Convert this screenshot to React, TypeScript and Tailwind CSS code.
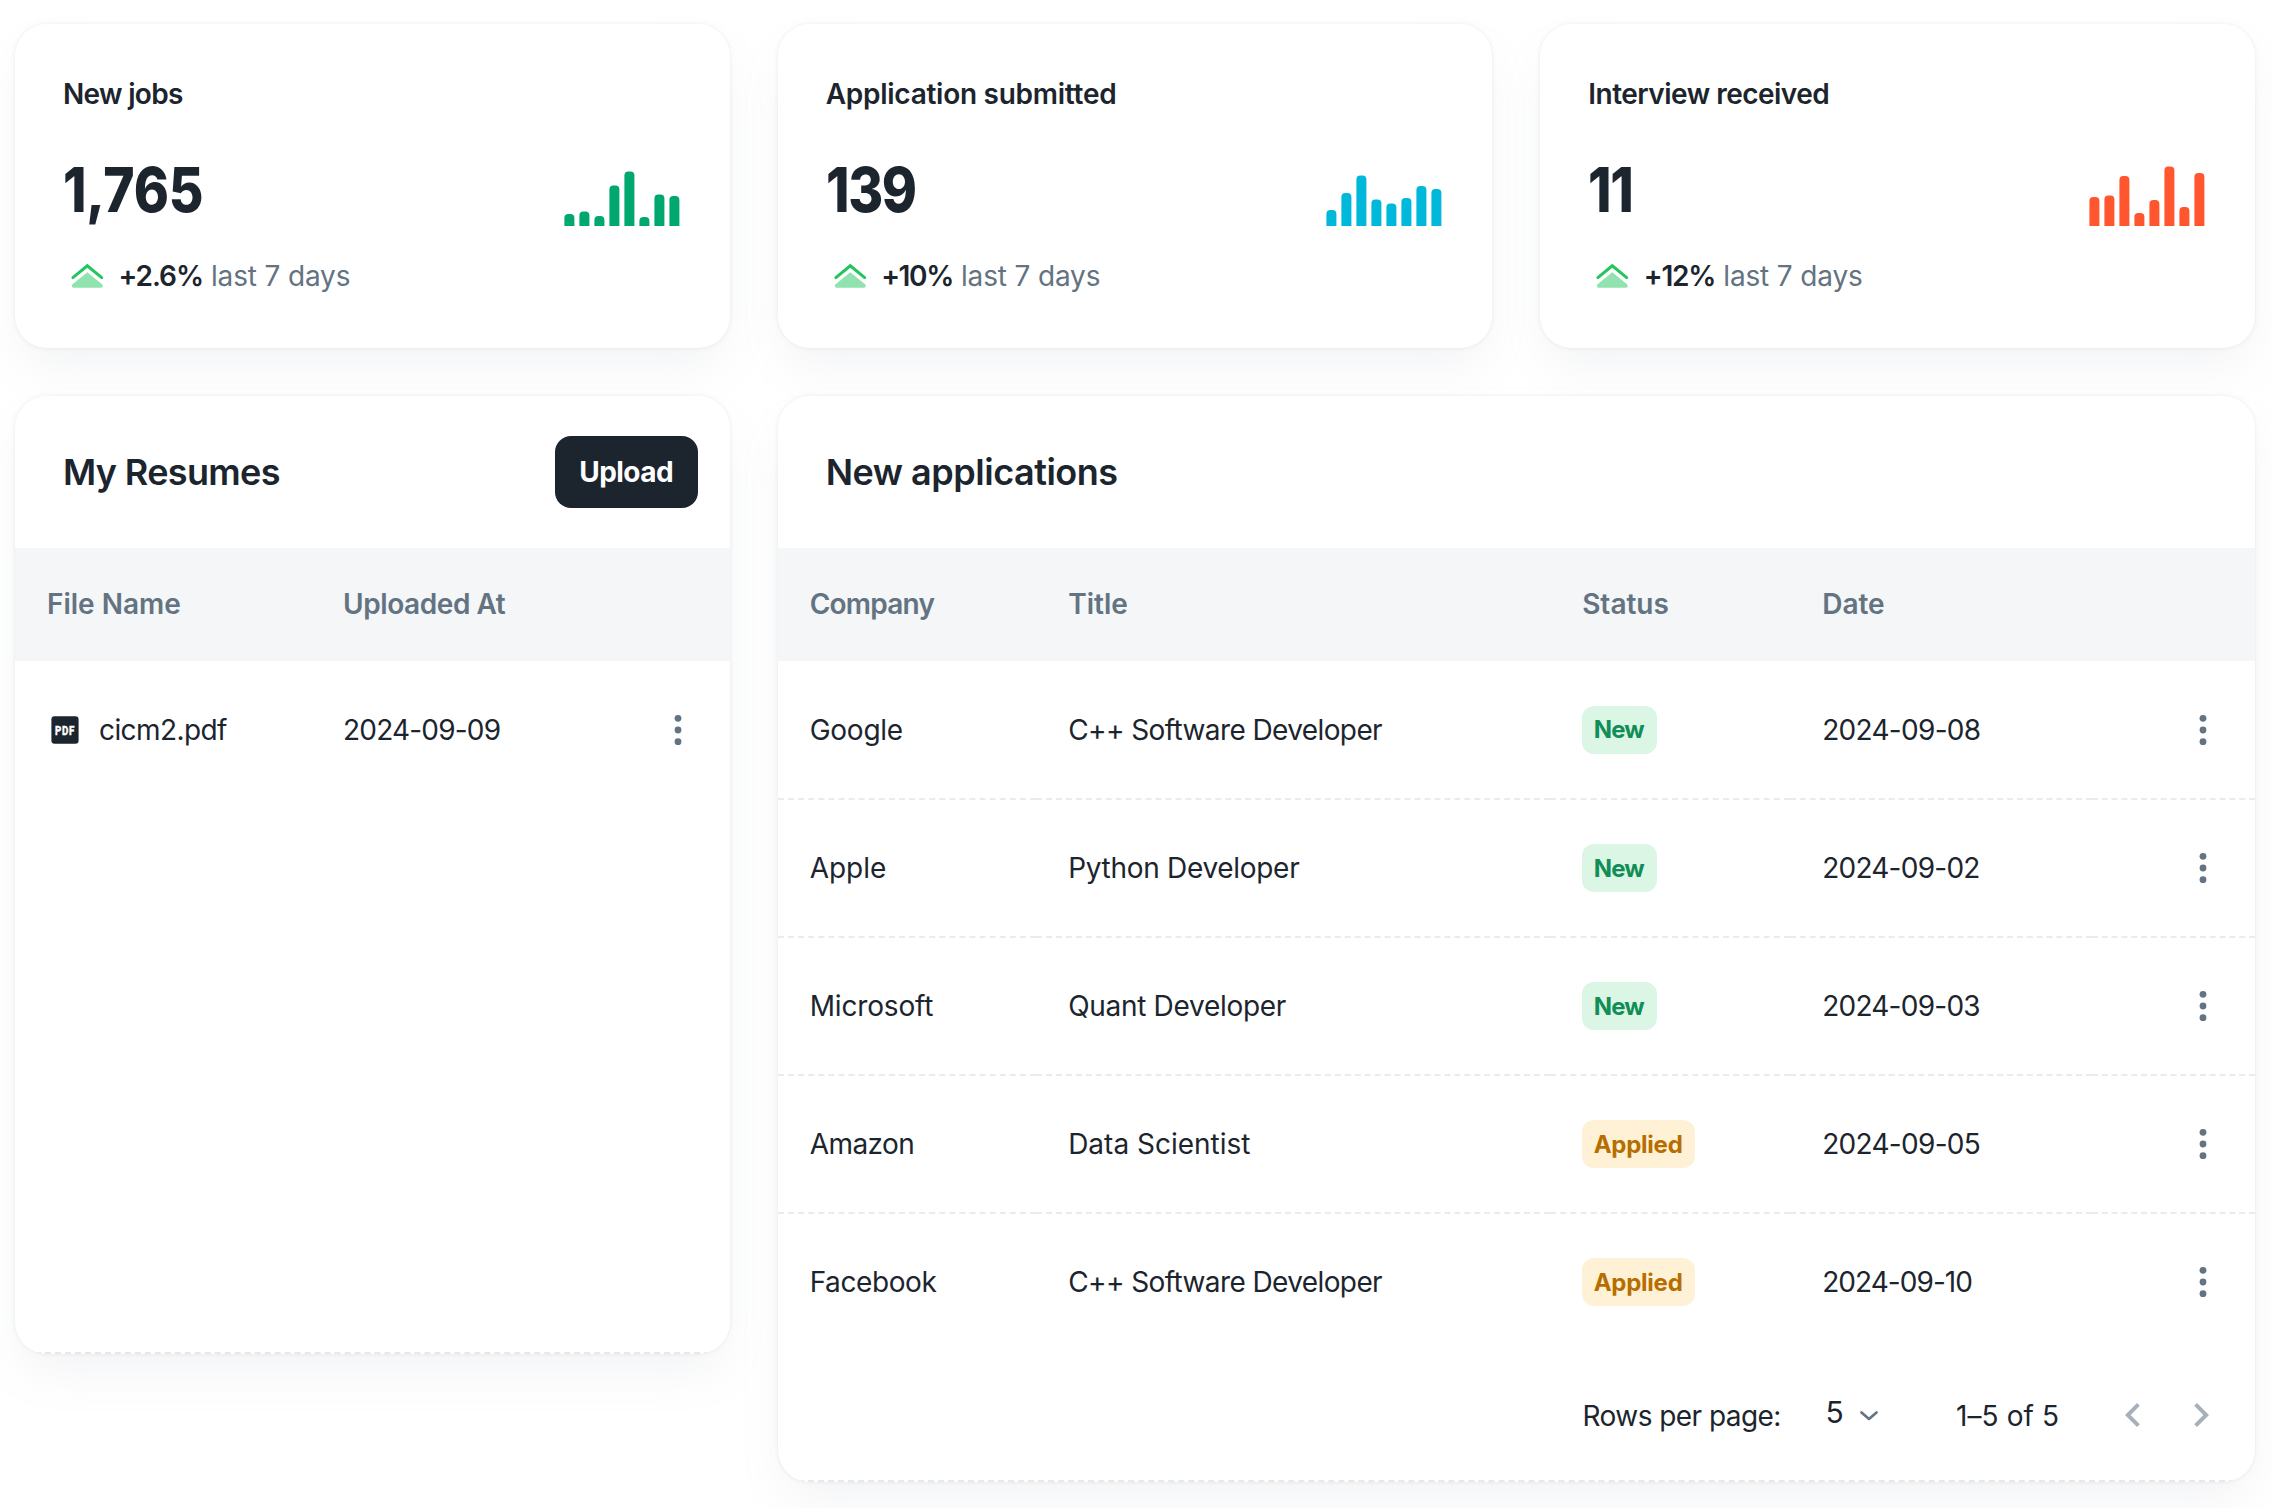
import clsx from "clsx";

type Stat = {
  title: string;
  titleTracking: string;
  value: string;
  valueTracking: string;
  change: string;
  changeTracking: string;
  barColor: string;
  bars: number[];
};

const stats: Stat[] = [
  {
    title: "New jobs",
    titleTracking: "tracking-[-0.69px]",
    value: "1,765",
    valueTracking: "tracking-[-0.2px]",
    change: "+2.6%",
    changeTracking: "tracking-[-1.06px]",
    barColor: "#00a76f",
    bars: [12, 14.5, 10, 40.5, 54.5, 9, 31.5, 30],
  },
  {
    title: "Application submitted",
    titleTracking: "tracking-[-0.26px]",
    value: "139",
    valueTracking: "tracking-[-1.6px]",
    change: "+10%",
    changeTracking: "tracking-[-1.38px]",
    barColor: "#00b8d9",
    bars: [16, 33, 50.5, 26.5, 22.5, 28, 40, 37],
  },
  {
    title: "Interview received",
    titleTracking: "tracking-[-0.52px]",
    value: "11",
    valueTracking: "tracking-[-1.6px]",
    change: "+12%",
    changeTracking: "tracking-[-1.21px]",
    barColor: "#ff5630",
    bars: [29, 30.5, 50, 13, 26, 59.5, 19, 53],
  },
];

type Application = {
  company: string;
  companyTracking: string;
  title: string;
  titleTracking: string;
  status: "New" | "Applied";
  date: string;
  dateTracking: string;
};

const applications: Application[] = [
  { company: "Google", companyTracking: "tracking-[-0.25px]", title: "C++ Software Developer", titleTracking: "tracking-[-0.6px]", status: "New", date: "2024-09-08", dateTracking: "tracking-[-0.7px]" },
  { company: "Apple", companyTracking: "tracking-normal", title: "Python Developer", titleTracking: "tracking-[-0.3px]", status: "New", date: "2024-09-02", dateTracking: "tracking-[-0.75px]" },
  { company: "Microsoft", companyTracking: "tracking-[-0.15px]", title: "Quant Developer", titleTracking: "tracking-[-0.3px]", status: "New", date: "2024-09-03", dateTracking: "tracking-[-0.75px]" },
  { company: "Amazon", companyTracking: "tracking-[-0.55px]", title: "Data Scientist", titleTracking: "tracking-[0px]", status: "Applied", date: "2024-09-05", dateTracking: "tracking-[-0.7px]" },
  { company: "Facebook", companyTracking: "tracking-[-0.4px]", title: "C++ Software Developer", titleTracking: "tracking-[-0.6px]", status: "Applied", date: "2024-09-10", dateTracking: "tracking-[-0.95px]" },
];

const cardClass =
  "overflow-hidden rounded-[32px] bg-white shadow-[0_0_4px_0_rgba(145,158,171,0.2),0_24px_48px_-8px_rgba(145,158,171,0.12)]";

function BarChart({ bars, color }: { bars: number[]; color: string }) {
  return (
    <svg width="116" height="60" viewBox="0 0 116 60" fill={color}>
      {bars.map((h, i) => {
        const x = 0.4 + i * 15;
        const top = 60 - h;
        return (
          <path
            key={i}
            d={`M${x} 60V${top + 4}Q${x} ${top} ${x + 4} ${top}H${x + 6}Q${x + 10} ${top} ${x + 10} ${top + 4}V60Z`}
          />
        );
      })}
    </svg>
  );
}

function TrendIcon() {
  return (
    <svg width="48" height="44" viewBox="0 0 48 44" className="shrink-0">
      <path d="M9.900 23.600 24.300 11.800 38.700 23.600" fill="none" stroke="#22c55e" strokeWidth="3" strokeLinecap="round" />
      <path d="M24.300 18.200 39 30.200Q41 33.800 37.500 33.800H11Q7.600 33.800 9.600 30.200Z" fill="#90e2ae" />
    </svg>
  );
}

function PdfIcon() {
  return (
    <svg width="36" height="36" viewBox="0 0 36 36" className="shrink-0">
      <rect x="4.4" y="4.3" width="27.2" height="27.4" rx="3.2" fill="#1c252e" />
      <g transform="translate(8 22.7) scale(0.78 1)">
        <text
          fill="#fff"
          stroke="#fff"
          strokeWidth="0.5"
          letterSpacing="0.9"
          className="font-[Roboto,sans-serif] text-[12.5px] font-bold"
        >
          PDF
        </text>
      </g>
    </svg>
  );
}

function MoreIcon() {
  return (
    <svg width="8" height="32" viewBox="0 0 8 32" fill="#637381" className="block">
      <circle cx="4" cy="4.3" r="3.4" />
      <circle cx="4" cy="16" r="3.4" />
      <circle cx="4" cy="27.7" r="3.4" />
    </svg>
  );
}

function StatCard({ stat }: { stat: Stat }) {
  return (
    <section className={clsx(cardClass, "h-[324px] px-12 pt-12")}>
      <h3 className={clsx("text-[28px] leading-[44px] font-semibold", stat.titleTracking)}>{stat.title}</h3>
      <div className="mt-[38px] flex items-end justify-between">
        <div className={clsx("origin-left scale-x-[0.86] text-[62px] leading-[72px] font-extrabold", stat.valueTracking)}>
          {stat.value}
        </div>
        <div className="mr-[2px]">
          <BarChart bars={stat.bars} color={stat.barColor} />
        </div>
      </div>
      <div className="mt-[28px] flex items-center text-[28px] leading-[44px]">
        <TrendIcon />
        <span className={clsx("ml-[7.5px] font-semibold", stat.changeTracking)}>{stat.change}</span>
        <span className="ml-[8px] tracking-[-0.15px] text-[#637381]">last 7 days</span>
      </div>
    </section>
  );
}

function StatusLabel({ status }: { status: Application["status"] }) {
  return (
    <span
      className={clsx(
        "flex h-12 items-center rounded-xl pt-px pl-[11.5px] text-[24px] leading-none font-bold",
        status === "New"
          ? "w-[75px] bg-[#dbf6e5] tracking-[-0.8px] text-[#118d57]"
          : "w-[113px] bg-[#fff1d6] tracking-[-0.25px] text-[#b76e00]",
      )}
    >
      {status}
    </span>
  );
}

function ResumesCard() {
  return (
    <section className={clsx(cardClass, "flex h-[958px] flex-col")}>
      <header className="flex h-[152px] items-center justify-between pr-8 pl-12">
        <h2 className="text-[36px] font-[560] tracking-[-0.65px]">My Resumes</h2>
        <button className="h-[72px] w-[143px] rounded-2xl bg-[#1c252e] text-[28px] font-bold tracking-[-0.57px] text-white">
          Upload
        </button>
      </header>
      <table className="w-full table-fixed border-separate border-spacing-0 text-left text-[28px]">
        <thead>
          <tr className="h-[113px] bg-[#f4f6f8] text-[#637381]">
            <th className="w-[296px] pb-px pl-8 font-[560]">File Name</th>
            <th className="pb-px pl-8 font-[560] tracking-[-0.42px]">Uploaded At</th>
            <th className="w-[112px]" />
          </tr>
        </thead>
        <tbody>
          <tr className="h-[138px]">
            <td className="pl-8">
              <div className="flex items-center gap-4 tracking-[-0.59px]">
                <PdfIcon />
                cicm2.pdf
              </div>
            </td>
            <td className="pl-8 tracking-[-0.8px]">2024-09-09</td>
            <td className="pl-[56px]">
              <MoreIcon />
            </td>
          </tr>
        </tbody>
      </table>
      <div className="mt-auto border-b-2 border-dashed border-[#e6e9eb]" />
    </section>
  );
}

function ApplicationsCard() {
  return (
    <section className={clsx(cardClass, "col-span-2 h-[1086px]")}>
      <header className="flex h-[152px] items-center pl-12">
        <h2 className="text-[36px] font-[560] tracking-[-0.48px]">New applications</h2>
      </header>
      <table className="w-full table-fixed border-separate border-spacing-0 text-left text-[28px]">
        <thead>
          <tr className="h-[113px] bg-[#f4f6f8] text-[#637381]">
            <th className="w-[258.5px] pb-px pl-8 font-[560] tracking-[-0.75px]">Company</th>
            <th className="w-[514px] pb-px pl-8 font-[560]">Title</th>
            <th className="w-[240px] pb-px pl-8 font-[560]">Status</th>
            <th className="w-[302px] pb-px pl-8 font-[560]">Date</th>
            <th />
          </tr>
        </thead>
        <tbody className="[&>tr:first-child]:h-[139px] [&>tr:last-child>td]:pb-[2px] [&>tr:not(:last-child)>td]:border-b-2 [&>tr:not(:last-child)>td]:border-dashed [&>tr:not(:last-child)>td]:border-[#e9ecee]">
          {applications.map((a) => (
            <tr key={a.company} className="h-[138px]">
              <td className={clsx("pl-8", a.companyTracking)}>{a.company}</td>
              <td className={clsx("pl-8", a.titleTracking)}>{a.title}</td>
              <td className="pl-8">
                <StatusLabel status={a.status} />
              </td>
              <td className={clsx("pl-8", a.dateTracking)}>{a.date}</td>
              <td className="pl-[107px]">
                <MoreIcon />
              </td>
            </tr>
          ))}
        </tbody>
      </table>
      <footer className="flex h-[128px] items-center justify-end pr-[30px] text-[28px]">
        <span className="w-[243px] tracking-[-0.55px]">Rows per page:</span>
        <span className="w-[34.5px] pb-2 text-[30px]">5</span>
        <svg width="18" height="12" viewBox="0 0 18 12" fill="none" className="mr-[78px]">
          <path d="M1.500 2.400 9 9l7.500-6.600" stroke="#637381" strokeWidth="2.6" strokeLinecap="round" strokeLinejoin="round" />
        </svg>
        <span className="w-[152.500px] tracking-[0.1px]">1–5 of 5</span>
        <svg width="48" height="48" viewBox="0 0 24 24" fill="#a7b1bb" className="mb-[2px]">
          <path d="M15.410 16.590 10.830 12l4.580-4.590L14 6l-6 6 6 6z" />
        </svg>
        <svg width="48" height="48" viewBox="0 0 24 24" fill="#a7b1bb" className="mb-[2px] ml-[20.5px]">
          <path d="M8.590 16.590 13.170 12 8.590 7.410 10 6l6 6-6 6z" />
        </svg>
      </footer>
      <div className="border-b-2 border-dashed border-[#e6e9eb]" />
    </section>
  );
}

export default function App() {
  return (
    <main className="h-[1508px] w-[2272px] overflow-hidden bg-white pt-6 pr-[17px] pl-[15px] font-[Inter,sans-serif] text-[#1c252e]">
      <div className="grid grid-cols-3 items-start gap-12">
        {stats.map((s) => (
          <StatCard key={s.title} stat={s} />
        ))}
        <ResumesCard />
        <ApplicationsCard />
      </div>
    </main>
  );
}
